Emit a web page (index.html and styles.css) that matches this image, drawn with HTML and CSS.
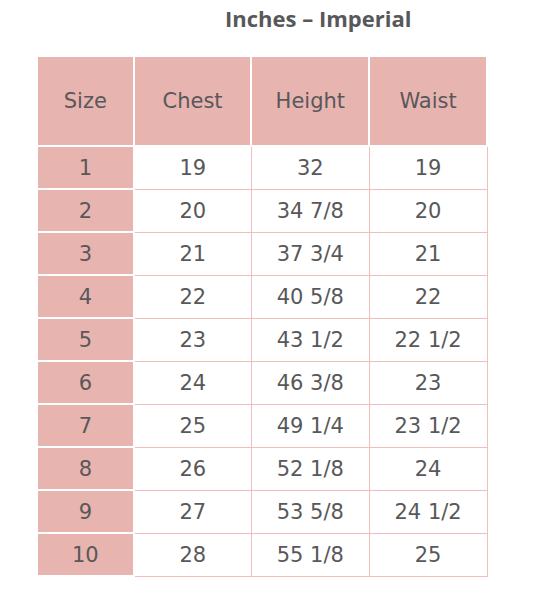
FILE: index.html
```html
<!DOCTYPE html>
<html>
<head>
<meta charset="utf-8">
<link rel="stylesheet" href="styles.css">
</head>
<body>
<div class="page">
  <h1 class="title">Inches – Imperial</h1>
  <table class="chart">
    <thead>
      <tr><th class="c-size">Size</th><th class="c-col">Chest</th><th class="c-col">Height</th><th class="c-col">Waist</th></tr>
    </thead>
    <tbody>
      <tr><td class="s">1</td><td>19</td><td>32</td><td>19</td></tr>
      <tr><td class="s">2</td><td>20</td><td>34 7/8</td><td>20</td></tr>
      <tr><td class="s">3</td><td>21</td><td>37 3/4</td><td>21</td></tr>
      <tr><td class="s">4</td><td>22</td><td>40 5/8</td><td>22</td></tr>
      <tr><td class="s">5</td><td>23</td><td>43 1/2</td><td>22 1/2</td></tr>
      <tr><td class="s">6</td><td>24</td><td>46 3/8</td><td>23</td></tr>
      <tr><td class="s">7</td><td>25</td><td>49 1/4</td><td>23 1/2</td></tr>
      <tr><td class="s">8</td><td>26</td><td>52 1/8</td><td>24</td></tr>
      <tr><td class="s">9</td><td>27</td><td>53 5/8</td><td>24 1/2</td></tr>
      <tr><td class="s">10</td><td>28</td><td>55 1/8</td><td>25</td></tr>
    </tbody>
  </table>
</div>
</body>
</html>
```
FILE: styles.css
```css
html, body {
  margin: 0;
  padding: 0;
  background: #ffffff;
}
.page {
  padding-top: 5px;
  font-family: "DejaVu Sans", "Liberation Sans", sans-serif;
  color: #58585a;
}
.title {
  margin: 0 0 24px 225px;
  font-family: "Open Sans", "DejaVu Sans", sans-serif;
  font-size: 22px;
  font-weight: bold;
  line-height: 26px;
  color: #58585a;
}
.chart {
  margin-left: 36px;
  border-collapse: collapse;
  table-layout: fixed;
  width: 452px;
}
.chart th, .chart td {
  text-align: center;
  padding: 0;
  font-weight: normal;
  font-size: 21px;
}
.chart th {
  background: #e8b4b0;
  border: 2px solid #ffffff;
  height: 88px;
}
.c-size { width: 94px; }
.c-col { width: 115px; }
.chart td {
  height: 41px;
  border: 1px solid #f0bfbb;
  background: #ffffff;
}
.chart td.s {
  background: #e8b4b0;
  border: 2px solid #ffffff;
}
```
